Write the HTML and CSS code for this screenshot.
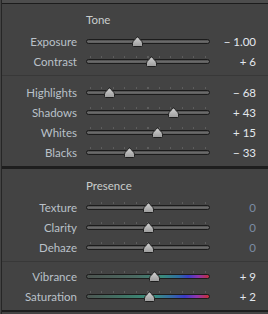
FILE: index.html
```html
<!DOCTYPE html>
<html lang="en">
<head>
    <meta charset="UTF-8">
    <title>Basic Panel</title>
    <link rel="stylesheet" href="styles.css">
</head>
<body>
    <div class="panel">
        <div class="topbar"></div>

        <!-- Tone section -->
        <div class="section">
            <div class="group first">
                <div class="title">Tone</div>
                <div class="row">
                    <span class="label">Exposure</span>
                    <div class="slider"><div class="track"></div><svg class="thumb" style="left: 51px" viewBox="0 0 11 11"><path d="M5.5 0.5 C6.3 2.6 10.5 4.6 10.5 7.2 L10.5 9.5 Q10.5 10.5 9.5 10.5 L1.5 10.5 Q0.5 10.5 0.5 9.5 L0.5 7.2 C0.5 4.6 4.7 2.6 5.5 0.5 Z"/></svg></div>
                    <span class="value">&minus; 1.00</span>
                </div>
                <div class="row">
                    <span class="label">Contrast</span>
                    <div class="slider"><div class="ticks"></div><div class="track"></div><svg class="thumb" style="left: 65px" viewBox="0 0 11 11"><path d="M5.5 0.5 C6.3 2.6 10.5 4.6 10.5 7.2 L10.5 9.5 Q10.5 10.5 9.5 10.5 L1.5 10.5 Q0.5 10.5 0.5 9.5 L0.5 7.2 C0.5 4.6 4.7 2.6 5.5 0.5 Z"/></svg></div>
                    <span class="value">+ 6</span>
                </div>
            </div>
            <div class="group">
                <div class="row">
                    <span class="label">Highlights</span>
                    <div class="slider"><div class="ticks"></div><div class="track"></div><svg class="thumb" style="left: 23px" viewBox="0 0 11 11"><path d="M5.5 0.5 C6.3 2.6 10.5 4.6 10.5 7.2 L10.5 9.5 Q10.5 10.5 9.5 10.5 L1.5 10.5 Q0.5 10.5 0.5 9.5 L0.5 7.2 C0.5 4.6 4.7 2.6 5.5 0.5 Z"/></svg></div>
                    <span class="value">&minus; 68</span>
                </div>
                <div class="row">
                    <span class="label">Shadows</span>
                    <div class="slider"><div class="ticks"></div><div class="track"></div><svg class="thumb" style="left: 87px" viewBox="0 0 11 11"><path d="M5.5 0.5 C6.3 2.6 10.5 4.6 10.5 7.2 L10.5 9.5 Q10.5 10.5 9.5 10.5 L1.5 10.5 Q0.5 10.5 0.5 9.5 L0.5 7.2 C0.5 4.6 4.7 2.6 5.5 0.5 Z"/></svg></div>
                    <span class="value">+ 43</span>
                </div>
                <div class="row">
                    <span class="label">Whites</span>
                    <div class="slider"><div class="ticks"></div><div class="track"></div><svg class="thumb" style="left: 71px" viewBox="0 0 11 11"><path d="M5.5 0.5 C6.3 2.6 10.5 4.6 10.5 7.2 L10.5 9.5 Q10.5 10.5 9.5 10.5 L1.5 10.5 Q0.5 10.5 0.5 9.5 L0.5 7.2 C0.5 4.6 4.7 2.6 5.5 0.5 Z"/></svg></div>
                    <span class="value">+ 15</span>
                </div>
                <div class="row">
                    <span class="label">Blacks</span>
                    <div class="slider"><div class="ticks"></div><div class="track"></div><svg class="thumb" style="left: 43px" viewBox="0 0 11 11"><path d="M5.5 0.5 C6.3 2.6 10.5 4.6 10.5 7.2 L10.5 9.5 Q10.5 10.5 9.5 10.5 L1.5 10.5 Q0.5 10.5 0.5 9.5 L0.5 7.2 C0.5 4.6 4.7 2.6 5.5 0.5 Z"/></svg></div>
                    <span class="value">&minus; 33</span>
                </div>
            </div>
        </div>

        <!-- Presence section -->
        <div class="section">
            <div class="group first">
                <div class="title">Presence</div>
                <div class="row">
                    <span class="label">Texture</span>
                    <div class="slider"><div class="ticks"></div><div class="track"></div><svg class="thumb" style="left: 62px" viewBox="0 0 11 11"><path d="M5.5 0.5 C6.3 2.6 10.5 4.6 10.5 7.2 L10.5 9.5 Q10.5 10.5 9.5 10.5 L1.5 10.5 Q0.5 10.5 0.5 9.5 L0.5 7.2 C0.5 4.6 4.7 2.6 5.5 0.5 Z"/></svg></div>
                    <span class="value zero">0</span>
                </div>
                <div class="row">
                    <span class="label">Clarity</span>
                    <div class="slider"><div class="ticks"></div><div class="track"></div><svg class="thumb" style="left: 62px" viewBox="0 0 11 11"><path d="M5.5 0.5 C6.3 2.6 10.5 4.6 10.5 7.2 L10.5 9.5 Q10.5 10.5 9.5 10.5 L1.5 10.5 Q0.5 10.5 0.5 9.5 L0.5 7.2 C0.5 4.6 4.7 2.6 5.5 0.5 Z"/></svg></div>
                    <span class="value zero">0</span>
                </div>
                <div class="row">
                    <span class="label">Dehaze</span>
                    <div class="slider"><div class="ticks"></div><div class="track"></div><svg class="thumb" style="left: 62px" viewBox="0 0 11 11"><path d="M5.5 0.5 C6.3 2.6 10.5 4.6 10.5 7.2 L10.5 9.5 Q10.5 10.5 9.5 10.5 L1.5 10.5 Q0.5 10.5 0.5 9.5 L0.5 7.2 C0.5 4.6 4.7 2.6 5.5 0.5 Z"/></svg></div>
                    <span class="value zero">0</span>
                </div>
            </div>
            <div class="group">
                <div class="row">
                    <span class="label">Vibrance</span>
                    <div class="slider"><div class="ticks"></div><div class="track vib"></div><svg class="thumb" style="left: 68px" viewBox="0 0 11 11"><path d="M5.5 0.5 C6.3 2.6 10.5 4.6 10.5 7.2 L10.5 9.5 Q10.5 10.5 9.5 10.5 L1.5 10.5 Q0.5 10.5 0.5 9.5 L0.5 7.2 C0.5 4.6 4.7 2.6 5.5 0.5 Z"/></svg></div>
                    <span class="value">+ 9</span>
                </div>
                <div class="row">
                    <span class="label">Saturation</span>
                    <div class="slider"><div class="ticks"></div><div class="track sat"></div><svg class="thumb" style="left: 63px" viewBox="0 0 11 11"><path d="M5.5 0.5 C6.3 2.6 10.5 4.6 10.5 7.2 L10.5 9.5 Q10.5 10.5 9.5 10.5 L1.5 10.5 Q0.5 10.5 0.5 9.5 L0.5 7.2 C0.5 4.6 4.7 2.6 5.5 0.5 Z"/></svg></div>
                    <span class="value">+ 2</span>
                </div>
            </div>
        </div>
        <div class="bottom"></div>
    </div>

    <svg width="0" height="0" class="defs">
        <defs>
            <linearGradient id="thumbFill" x1="0" y1="0" x2="0" y2="1">
                <stop offset="0" stop-color="#d4d4d4"/>
                <stop offset="1" stop-color="#9c9c9c"/>
            </linearGradient>
        </defs>
    </svg>
</body>
</html>
```

FILE: styles.css
```css
html, body {
    margin: 0;
    padding: 0;
    background-color: #434343;
}

body {
    font-family: Lato, "Open Sans", sans-serif;
    font-size: 11.5px;
    width: 268px;
    height: 314px;
    overflow: hidden;
}

.panel {
    border-left: 1px solid #262626;
    margin-left: 1px;
    height: 314px;
    box-sizing: border-box;
}

.topbar {
    height: 3px;
    background-color: #4d4d4d;
    border-bottom: 1px solid #1c1c1c;
}

.section + .section {
    border-top: 3px solid #1e1e1e;
}

.group {
    padding: 6px 0 4px 0;
}

.group + .group {
    border-top: 1px solid #383838;
}

.section:first-of-type .group.first {
    padding-bottom: 5px;
}

.section + .section .group.first {
    padding-top: 7px;
}

.section + .section .group + .group {
    padding-top: 4px;
}

.title {
    height: 20px;
    line-height: 20px;
    margin-bottom: 1px;
    padding-left: 84px;
    color: #c9cdcd;
}

.row {
    display: grid;
    grid-template-columns: 75px 124px 37px;
    column-gap: 9px;
    align-items: center;
    height: 20px;
}

.label {
    text-align: right;
    color: #bac1c9;
}

.value {
    text-align: right;
    color: #e3e8ee;
}

.value.zero {
    color: #7b8ca4;
}

/* slider */
.slider {
    position: relative;
    height: 20px;
}

.track {
    position: absolute;
    left: 0;
    right: 0;
    top: 8px;
    height: 3px;
    border: 1px solid #1c1c1c;
    border-radius: 3px;
    background: linear-gradient(#4a4a4a, #707070 60%, #555);
}

.track.vib {
    background: linear-gradient(to right, #4d5450 0%, #4b6a62 40%, #3a8a7c 62%, #2f6fa0 75%, #3a3ec4 83%, #8c34b0 91%, #c0303e 100%);
}

.track.sat {
    background: linear-gradient(to right, #4d5652 0%, #3f7a6a 35%, #3a9080 55%, #3568a8 70%, #3b3cc6 80%, #9136b0 90%, #c83036 100%);
}

.ticks {
    position: absolute;
    left: 4px;
    width: 117px;
    top: 5px;
    height: 2px;
    background: repeating-linear-gradient(to right, #5d5d5d 0 1px, transparent 1px 11.5px);
}

.thumb {
    position: absolute;
    top: 5px;
    width: 11px;
    height: 11px;
    margin-left: -5px;
    overflow: visible;
}

.thumb path {
    fill: url(#thumbFill);
    stroke: #1e1e1e;
    stroke-width: 1;
}

.defs {
    position: absolute;
}

.bottom {
    height: 2px;
    background-color: #1e1e1e;
}
```
